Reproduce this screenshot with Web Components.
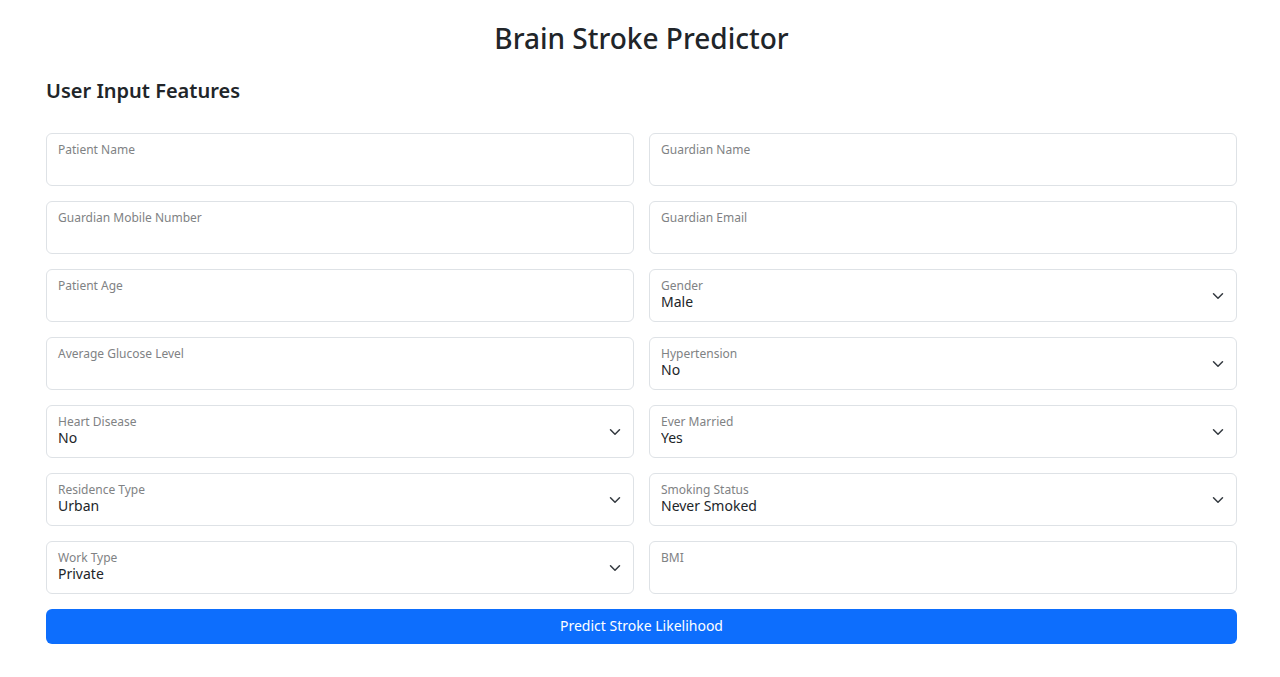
<!DOCTYPE html>
<html lang="en">
<head>
<meta charset="utf-8">
<meta name="viewport" content="width=device-width, initial-scale=1">
<title>Brain Stroke Predictor</title>
<style>
  body {
    margin: 0;
    background: #fff;
    color: #212529;
    font-family: "Segoe UI", "Noto Sans", "Open Sans", sans-serif;
    font-size: 14px;
  }
</style>
</head>
<body>
<stroke-predictor>
  <span slot="title">Brain Stroke Predictor</span>
  <span slot="subtitle">User Input Features</span>
  <text-field label="Patient Name"></text-field>
  <text-field label="Guardian Name"></text-field>
  <text-field label="Guardian Mobile Number" type="tel"></text-field>
  <text-field label="Guardian Email" type="email"></text-field>
  <text-field label="Patient Age" inputmode="numeric"></text-field>
  <select-field label="Gender" options="Male|Female|Other"></select-field>
  <text-field label="Average Glucose Level" inputmode="decimal"></text-field>
  <select-field label="Hypertension" options="No|Yes"></select-field>
  <select-field label="Heart Disease" options="No|Yes"></select-field>
  <select-field label="Ever Married" options="Yes|No"></select-field>
  <select-field label="Residence Type" options="Urban|Rural"></select-field>
  <select-field label="Smoking Status" options="Never Smoked|Formerly Smoked|Smokes"></select-field>
  <select-field label="Work Type" options="Private|Self-employed|Government"></select-field>
  <text-field label="BMI" inputmode="decimal"></text-field>
  <primary-button slot="action">Predict Stroke Likelihood</primary-button>
</stroke-predictor>

<script>
  const fieldStyles = `
    :host { display: block; min-width: 0; }
    .field { display: grid; }
    .field > * { grid-area: 1 / 1; }
    label {
      z-index: 1;
      align-self: start;
      justify-self: start;
      padding: 7px 12px 0;
      font-size: 12px;
      line-height: 20px;
      color: #808284;
      pointer-events: none;
    }
    input, select {
      box-sizing: border-box;
      width: 100%;
      height: 53px;
      margin: 0;
      padding: 20px 11px 7px;
      border: 1px solid #dee2e6;
      border-radius: 6px;
      background: #fff;
      color: inherit;
      font-family: inherit;
      font-size: 14px;
      line-height: 24px;
      appearance: none;
      outline: none;
    }
    select { padding-right: 36px; }
    input:focus, select:focus {
      border-color: #86b7fe;
      box-shadow: 0 0 0 4px #0d6efd40;
    }
    svg {
      z-index: 1;
      align-self: center;
      justify-self: end;
      width: 12px;
      height: 12px;
      margin-right: 13px;
      pointer-events: none;
    }
  `;

  customElements.define('text-field', class extends HTMLElement {
    constructor() {
      super();
      this.attachShadow({ mode: 'open' }).innerHTML = `
        <style>${fieldStyles}</style>
        <div class="field"><label for="control"></label><input id="control"></div>`;
    }
    connectedCallback() {
      const input = this.shadowRoot.querySelector('input');
      this.shadowRoot.querySelector('label').textContent = this.getAttribute('label');
      input.type = this.getAttribute('type') || 'text';
      input.inputMode = this.getAttribute('inputmode') || '';
    }
  });

  customElements.define('select-field', class extends HTMLElement {
    constructor() {
      super();
      this.attachShadow({ mode: 'open' }).innerHTML = `
        <style>${fieldStyles}</style>
        <div class="field">
          <label for="control"></label>
          <select id="control"></select>
          <svg viewBox="0 0 16 16" aria-hidden="true"><path fill="none" stroke="#343a40" stroke-linecap="round" stroke-linejoin="round" stroke-width="2" d="m2 5 6 6 6-6"/></svg>
        </div>`;
    }
    connectedCallback() {
      this.shadowRoot.querySelector('label').textContent = this.getAttribute('label');
      this.shadowRoot.querySelector('select').replaceChildren(
        ...this.getAttribute('options').split('|').map(text => new Option(text)));
    }
  });

  customElements.define('primary-button', class extends HTMLElement {
    constructor() {
      super();
      this.attachShadow({ mode: 'open' }).innerHTML = `
        <style>
          :host { display: block; }
          button {
            display: block;
            width: 100%;
            padding: 5px 12px 6px;
            border: 0;
            border-radius: 6px;
            background: #0d6efd;
            color: #fff;
            font-family: inherit;
            font-size: 14px;
            line-height: 24px;
            cursor: pointer;
          }
          button:hover { background: #0b5ed7; }
        </style>
        <button type="button"><slot></slot></button>`;
    }
  });

  customElements.define('stroke-predictor', class extends HTMLElement {
    constructor() {
      super();
      this.attachShadow({ mode: 'open' }).innerHTML = `
        <style>
          :host { display: block; padding: 20px 43px 32px 46px; }
          h1, h2 { margin: 0; font-weight: 500; }
          h1 { font-size: 28px; line-height: 36px; text-align: center; }
          h2 { margin-top: 21px; font-size: 20px; line-height: 28px; font-weight: 600; }
          form {
            display: grid;
            grid-template-columns: repeat(2, minmax(0, 1fr));
            gap: 15px;
            margin-top: 28px;
          }
          .action { grid-column: 1 / -1; }
        </style>
        <main>
          <h1><slot name="title"></slot></h1>
          <h2><slot name="subtitle"></slot></h2>
          <form>
            <slot></slot>
            <div class="action"><slot name="action"></slot></div>
          </form>
        </main>`;
    }
  });
</script>
</body>
</html>
